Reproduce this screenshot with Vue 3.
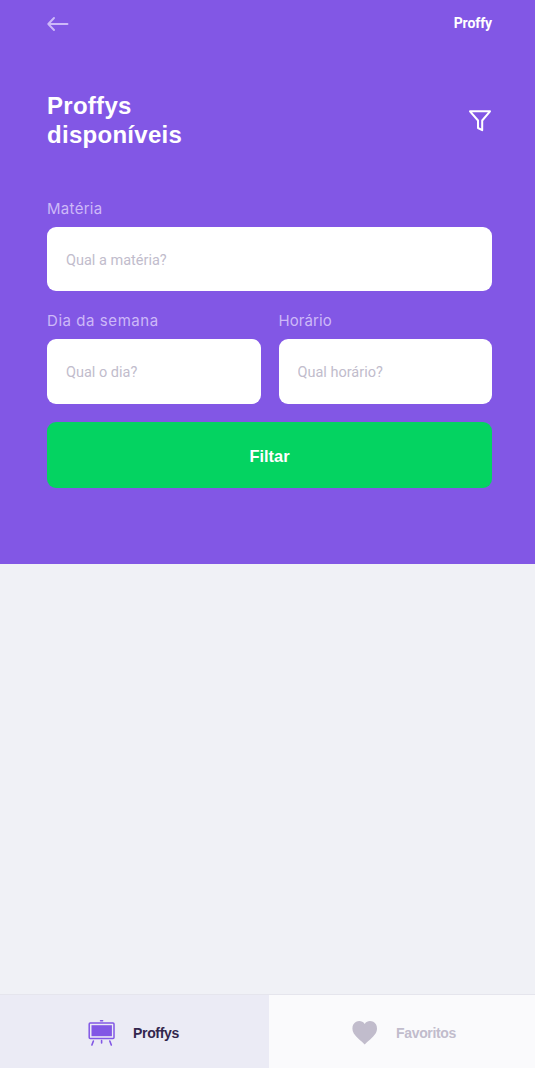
<script setup>
const tabs = [
  { name: 'Proffys', active: true },
  { name: 'Favoritos', active: false },
]
</script>

<template>
  <div class="screen">
    <header class="hero">
      <div class="topbar">
        <svg class="back" width="22" height="16" viewBox="0 0 22 16">
          <path d="M20.5 8H1.500M7 2L1.300 8l5.700 6" />
        </svg>
        <span class="logo">Proffy</span>
      </div>

      <div class="heading">
        <h1>Proffys<br />disponíveis</h1>
        <svg class="filter" width="24" height="22" viewBox="0 0 24 22">
          <path d="M2 1.3H22L14.2 10.5V20.2L10 18V10.5Z" />
        </svg>
      </div>

      <form class="form" @submit.prevent>
        <label class="field">
          <span class="label materia">Matéria</span>
          <input class="in-materia" placeholder="Qual a matéria?" />
        </label>
        <div class="row">
          <label class="field">
            <span class="label dia">Dia da semana</span>
            <input placeholder="Qual o dia?" />
          </label>
          <label class="field">
            <span class="label hora">Horário</span>
            <input placeholder="Qual horário?" />
          </label>
        </div>
        <button type="submit"><span>Filtar</span></button>
      </form>
    </header>

    <main class="list"></main>

    <nav class="tabs">
      <a v-for="tab in tabs" :key="tab.name" class="tab" :class="{ active: tab.active }">
        <svg v-if="tab.active" class="board" width="28" height="28" viewBox="0 0 28 28">
          <rect x="1.2" y="4" width="24.8" height="15.4" rx="1" fill="none" stroke="#8257e5" stroke-width="1.5" />
          <rect x="3.5" y="6.2" width="20.400" height="11" fill="#8257e5" />
          <path d="M12.600 1.700h2M5.400 22l-1.500 4M13.600 21.600v2.300M21.800 22l1.500 4" fill="none" stroke="#8257e5" stroke-width="1.6" stroke-linecap="round" />
        </svg>
        <svg v-else class="heart" width="26" height="25" viewBox="0 0 26 25">
          <path d="M12.700 24.500C10 21.300 4.400 17.500 1.800 13.400C-.7 9.200 .2 3.900 4.100 1.800C7.400 .3 10.700 1.200 12.700 3.900C14.700 .6 18.600 .4 21.300 1.800C25.200 3.900 26.100 9.200 23.600 13.400C21 17.500 15.400 21.300 12.700 24.500Z" />
        </svg>
        <span>{{ tab.name }}</span>
      </a>
    </nav>
  </div>
</template>

<style>
body {
  margin: 0;
}
</style>

<style scoped>
.screen {
  width: 535px;
  height: 1068px;
  display: flex;
  flex-direction: column;
  overflow: hidden;
  background: #f0f1f6;
  font-family: "Liberation Sans", Arial, sans-serif;
}
.hero {
  box-sizing: border-box;
  height: 564.4px;
  padding: 0 43px 0 47px;
  background: #8257e5;
}
.topbar {
  height: 48px;
  display: flex;
  align-items: center;
  justify-content: space-between;
}
.back path {
  fill: none;
  stroke: #cdb9f8;
  stroke-width: 1.9;
  stroke-linecap: round;
  stroke-linejoin: round;
}
.logo {
  padding-bottom: 2px;
  color: #fff;
  font: 700 14px/20px "Roboto", sans-serif;
  letter-spacing: -0.1px;
}
.heading {
  height: 60px;
  margin-top: 42px;
  display: flex;
  align-items: center;
  justify-content: space-between;
}
h1 {
  margin: 0;
  color: #fff;
  font-size: 24px;
  line-height: 29px;
  letter-spacing: 0.28px;
}
.filter {
  margin-top: 2px;
}
.filter path {
  fill: none;
  stroke: #fff;
  stroke-width: 2;
  stroke-linejoin: round;
}
.form {
  margin-top: 49px;
}
.field {
  display: block;
}
.label {
  display: block;
  height: 28px;
  color: #cdb9f8;
  font: 400 15px/19px "Inter", sans-serif;
  white-space: nowrap;
}
.materia {
  letter-spacing: 0.3px;
}
.dia {
  letter-spacing: 0.56px;
}
.hora {
  letter-spacing: 0.1px;
}
input {
  display: block;
  box-sizing: border-box;
  width: 100%;
  height: 64.5px;
  padding: 2px 19px 0;
  border: 0;
  border-radius: 9px;
  background: #fff;
  font: 400 14.5px "Roboto", sans-serif;
}
.in-materia {
  height: 64px;
}
input::placeholder {
  color: #c1bccc;
  opacity: 1;
}
.row {
  display: grid;
  grid-template-columns: 1fr 1fr;
  gap: 18px;
  margin-top: 20px;
}
button {
  display: block;
  width: 100%;
  height: 66px;
  margin-top: 18.5px;
  padding: 3px 0 0;
  border: 0;
  border-radius: 9px;
  background: #04d361;
  color: #fff;
  font: 700 16.4px "Liberation Sans", Arial, sans-serif;
}
.list {
  flex: 1;
}
.tabs {
  display: grid;
  grid-template-columns: 269px 1fr;
  height: 74px;
}
.tab {
  box-sizing: border-box;
  display: flex;
  align-items: center;
  border-top: 1px solid #e5e5ed;
  padding: 2px 0 0 83px;
  background: #fafafc;
  color: #c1bccc;
  font-size: 14px;
  font-weight: 700;
  letter-spacing: -0.33px;
}
.tab.active {
  padding-left: 88px;
  background: #ebebf5;
  color: #32264d;
}
.tab span {
  margin-left: 18px;
  padding-top: 1px;
}
.tab.active span {
  margin-left: 17px;
}
.heart path {
  fill: #c1bccc;
}
</style>
